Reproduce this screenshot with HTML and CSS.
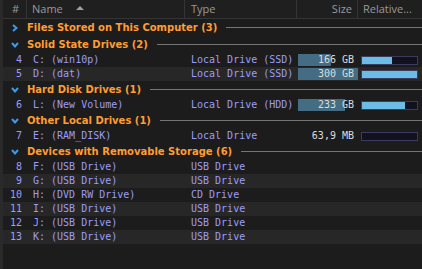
FILE: index.html
```html
<!DOCTYPE html>
<html>
<head>
<meta charset="utf-8">
<link rel="stylesheet" href="styles.css">
</head>
<body>
<div class="view">
  <div class="hdr">
    <div class="hc hc-num">#</div>
    <div class="hc hc-name">Name <span class="sort"></span></div>
    <div class="hc hc-type">Type</div>
    <div class="hc hc-size">Size</div>
    <div class="hc hc-rel">Relative...</div>
  </div>

  <div class="grp">
    <svg class="chev" width="8" height="8" viewBox="0 0 8 8"><path d="M2 1 L5.5 4 L2 7" fill="none" stroke="#3d9be9" stroke-width="2"/></svg>
    <span class="gt">Files Stored on This Computer (3)</span><span class="gl"></span>
  </div>

  <div class="grp">
    <svg class="chev" width="8" height="8" viewBox="0 0 8 8"><path d="M1 2 L4 5.5 L7 2" fill="none" stroke="#3d9be9" stroke-width="2"/></svg>
    <span class="gt">Solid State Drives (2)</span><span class="gl"></span>
  </div>
  <div class="row">
    <span class="c-num">4</span><span class="c-name">C: (win10p)</span><span class="c-type">Local Drive (SSD)</span>
    <span class="c-size"><span class="sbar" style="width:33px"></span><span class="stxt">166 GB</span></span>
    <span class="c-rel"><span class="rbar"><span class="rfill" style="width:55%"></span></span></span>
  </div>
  <div class="row alt">
    <span class="c-num">5</span><span class="c-name">D: (dat)</span><span class="c-type">Local Drive (SSD)</span>
    <span class="c-size"><span class="sbar" style="width:60px"></span><span class="stxt">300 GB</span></span>
    <span class="c-rel"><span class="rbar"><span class="rfill" style="width:100%"></span></span></span>
  </div>

  <div class="grp">
    <svg class="chev" width="8" height="8" viewBox="0 0 8 8"><path d="M1 2 L4 5.5 L7 2" fill="none" stroke="#3d9be9" stroke-width="2"/></svg>
    <span class="gt">Hard Disk Drives (1)</span><span class="gl"></span>
  </div>
  <div class="row">
    <span class="c-num">6</span><span class="c-name">L: (New Volume)</span><span class="c-type">Local Drive (HDD)</span>
    <span class="c-size"><span class="sbar" style="width:47px"></span><span class="stxt">233 GB</span></span>
    <span class="c-rel"><span class="rbar"><span class="rfill" style="width:78%"></span></span></span>
  </div>

  <div class="grp">
    <svg class="chev" width="8" height="8" viewBox="0 0 8 8"><path d="M1 2 L4 5.5 L7 2" fill="none" stroke="#3d9be9" stroke-width="2"/></svg>
    <span class="gt">Other Local Drives (1)</span><span class="gl"></span>
  </div>
  <div class="row">
    <span class="c-num">7</span><span class="c-name">E: (RAM_DISK)</span><span class="c-type">Local Drive</span>
    <span class="c-size"><span class="stxt">63,9 MB</span></span>
    <span class="c-rel"><span class="rbar"><span class="rfill" style="width:0%"></span></span></span>
  </div>

  <div class="grp">
    <svg class="chev" width="8" height="8" viewBox="0 0 8 8"><path d="M1 2 L4 5.5 L7 2" fill="none" stroke="#3d9be9" stroke-width="2"/></svg>
    <span class="gt">Devices with Removable Storage (6)</span><span class="gl"></span>
  </div>
  <div class="row">
    <span class="c-num">8</span><span class="c-name">F: (USB Drive)</span><span class="c-type">USB Drive</span><span class="c-size"></span><span class="c-rel"></span>
  </div>
  <div class="row alt">
    <span class="c-num">9</span><span class="c-name">G: (USB Drive)</span><span class="c-type">USB Drive</span><span class="c-size"></span><span class="c-rel"></span>
  </div>
  <div class="row">
    <span class="c-num">10</span><span class="c-name">H: (DVD RW Drive)</span><span class="c-type">CD Drive</span><span class="c-size"></span><span class="c-rel"></span>
  </div>
  <div class="row alt">
    <span class="c-num">11</span><span class="c-name">I: (USB Drive)</span><span class="c-type">USB Drive</span><span class="c-size"></span><span class="c-rel"></span>
  </div>
  <div class="row">
    <span class="c-num">12</span><span class="c-name">J: (USB Drive)</span><span class="c-type">USB Drive</span><span class="c-size"></span><span class="c-rel"></span>
  </div>
  <div class="row alt">
    <span class="c-num">13</span><span class="c-name">K: (USB Drive)</span><span class="c-type">USB Drive</span><span class="c-size"></span><span class="c-rel"></span>
  </div>
</div>
</body>
</html>
```

FILE: styles.css
```css
html, body {
  margin: 0;
  padding: 0;
  background: #1c1c1c;
}
.view {
  width: 422px;
  height: 269px;
  overflow: hidden;
  border-left: 3px solid #2a2a2a;
  box-sizing: border-box;
  background: #1c1c1c;
  font-family: "DejaVu Sans Mono", monospace;
  font-size: 10px;
}
.hdr {
  display: grid;
  grid-template-columns: 24px 158px 112px 61px 1fr;
  height: 18px;
  border-bottom: 1px solid #353535;
  background: #1f1f1f;
  font-family: "Open Sans", "Noto Sans", sans-serif;
  font-size: 11px;
  color: #9a9a9a;
}
.hc {
  display: flex;
  align-items: center;
  border-right: 1px solid #353535;
  line-height: 18px;
  white-space: nowrap;
  overflow: hidden;
}
.hc-num { justify-content: center; padding-left: 2px; }
.hc-name { padding-left: 5px; gap: 13px; }
.hc-type { padding-left: 6px; }
.hc-size { justify-content: flex-end; padding-right: 5px; }
.hc-rel { border-right: none; padding-left: 5px; }
.sort {
  width: 0;
  height: 0;
  border-left: 4px solid transparent;
  border-right: 4px solid transparent;
  border-bottom: 4px solid #a0a0a0;
  margin-top: -2px;
}
.grp {
  display: flex;
  align-items: center;
  height: 17px;
  padding-left: 8px;
}
.chev {
  flex: none;
  margin-right: 8px;
}
.gt {
  font-family: "DejaVu Sans", sans-serif;
  font-weight: bold;
  font-size: 10px;
  color: #ff9c33;
  white-space: nowrap;
}
.gl {
  flex: 1;
  height: 1px;
  background: #747474;
  margin-left: 9px;
}
.row {
  display: grid;
  grid-template-columns: 24px 158px 112px 61px 1fr;
  height: 14px;
  align-items: center;
  color: #9d9df8;
  white-space: nowrap;
  line-height: 14px;
}
.row.alt { background: #272727; }
.c-num { text-align: right; padding-right: 5px; }
.c-name { padding-left: 6px; }
.c-type { padding-left: 6px; }
.c-size {
  position: relative;
  height: 12px;
  margin-left: 1px;
  display: flex;
  justify-content: flex-end;
  align-items: center;
}
.sbar {
  position: absolute;
  left: 0;
  top: 0;
  height: 12px;
  background: #446c82;
}
.stxt {
  position: relative;
  color: #dcdcdc;
  padding-right: 4px;
}
.c-rel {
  display: flex;
  align-items: center;
  padding-left: 3px;
}
.rbar {
  display: block;
  width: 57px;
  height: 9px;
  box-sizing: border-box;
  border: 1px solid #3b3b5c;
  background: #11111f;
}
.rfill {
  display: block;
  height: 100%;
  background: #6bbde8;
}
```
